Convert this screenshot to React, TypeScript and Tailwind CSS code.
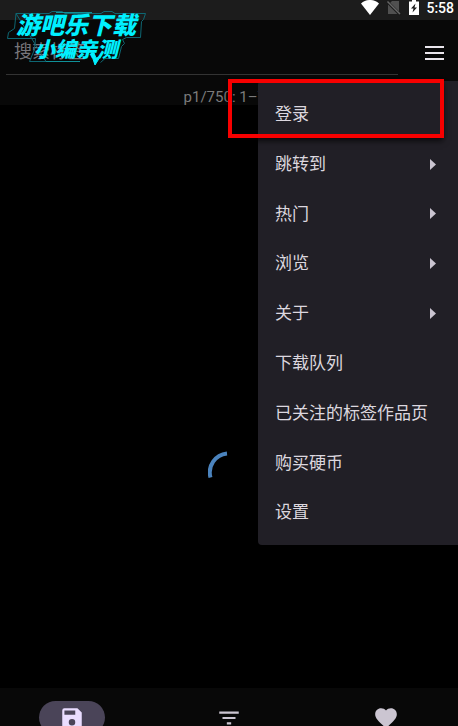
import { useState } from "react";

const menuItems = [
  { label: "登录" },
  { label: "跳转到", sub: true },
  { label: "热门", sub: true },
  { label: "浏览", sub: true },
  { label: "关于", sub: true },
  { label: "下载队列" },
  { label: "已关注的标签作品页" },
  { label: "购买硬币" },
  { label: "设置" },
];

function StatusBar() {
  return (
    <div className="flex h-5 items-start justify-end gap-1.5 bg-[#1c1c1c] pr-1 text-white">
      <svg className="h-4 w-5" viewBox="0 0 20 16" fill="currentColor">
        <path d="M1 3.500C6-1.200 14-1.200 19 3.500L10 15z" />
      </svg>
      <svg className="h-4 w-4" viewBox="0 0 16 16">
        <path d="M6 1h7v13H2V5z" fill="#505050" />
        <path d="M1 1.500L14.500 15" stroke="#1c1c1c" strokeWidth="3" />
        <path d="M1.500 1.500L14 14" stroke="#666" strokeWidth="1.500" />
      </svg>
      <svg className="h-4 w-3" viewBox="0 0 12 16">
        <path d="M4 0h4v1.500h3V15H1V1.500h3z" fill="#fff" />
        <path d="M7.500 3.500L3 8.500h2.500L4.500 12.500l4.500-5H6.500z" fill="#1c1c1c" />
      </svg>
      <span className="text-[14px] leading-4 font-medium">5:58</span>
    </div>
  );
}

function Watermark() {
  return (
    <div className="pointer-events-none absolute top-2 left-1 w-[150px] pt-0.5 font-black text-[#00f0ff] italic">
      <svg className="absolute inset-0 h-[60px] w-[150px]" viewBox="0 0 150 60" fill="none" stroke="#0e6672">
        <path d="M12 5.500H45L48 3.500H58L61 5.500H97L100 3.500H108L111 5.500H141.500L139.500 11.500L137.500 13.500L136.500 29.500H122.500L118.500 31.500L120.500 35.500L117.500 38.500L114.500 50.500H101L96.500 54.500M42 53.500H25.500L30.500 41.500L31.500 30.500H3.500L4.500 24.500L10.500 20.500L12 5.500z" />
        <path d="M52 4.500H88M42 53.500H76" stroke="#0f9098" />
        <path d="M87 45H90L92 50L96 49L91 57z" fill="#00f0ff" stroke="#00f0ff" />
      </svg>
      <div className="relative pl-3 text-[24px] leading-[32px]">游吧乐下载</div>
      <div className="relative -mt-1 pl-[30px] text-[21px] leading-[24px]">小编亲测</div>
    </div>
  );
}

export default function App() {
  const [query, setQuery] = useState("");

  return (
    <div className="relative flex min-h-screen flex-col overflow-hidden bg-black font-['Roboto','Noto_Sans_CJK_SC',sans-serif]">
      <StatusBar />

      <header className="bg-[#080808]">
        <div className="flex h-[61px] items-start justify-between pr-3 pl-[6px]">
          <input
            type="text"
            aria-label="搜索标签"
            placeholder="搜索标签"
            value={query}
            onChange={(e) => setQuery(e.target.value)}
            className="mr-6 h-[55px] min-w-0 flex-1 border-b border-[#333] bg-transparent px-2 pt-2 text-[18px] text-white outline-none placeholder:text-[#77757a]"
          />
          <button aria-label="菜单" className="mt-[21px] flex h-6 w-6 items-center justify-center text-[#e9e5ec]">
            <svg className="h-[14px] w-5" viewBox="0 0 20 14" fill="currentColor">
              <path d="M1 0h19v2H1zM1 6h19v2H1zM1 12h19v2H1z" />
            </svg>
          </button>
        </div>
        <p className="h-6 pt-1 text-center text-[15px] leading-6 text-[#7b7b7b]">p1/750: 1–75</p>
      </header>

      <main className="flex flex-1 items-center justify-center pt-[150px]">
        <svg className="h-[42px] w-[42px]" viewBox="0 0 42 42" fill="none">
          <path d="M19 2.500A19 19 0 0 0 2.500 26.500" stroke="#4b83bd" strokeWidth="4" />
        </svg>
      </main>

      <nav className="h-[38px] overflow-hidden bg-[#080808] pt-[13px]">
        <div className="-mx-1.5 grid grid-cols-3 justify-items-center text-[#cbc5d1]">
          <button aria-label="保存" className="flex h-[33px] w-[66px] items-center justify-center rounded-full bg-[#4a4458] text-[#eaddff]">
            <svg className="h-[26px] w-[26px]" viewBox="0 0 24 24" fill="currentColor">
              <path d="M17 3H5a2 2 0 0 0-2 2v14a2 2 0 0 0 2 2h14a2 2 0 0 0 2-2V7zm-5 16a3 3 0 1 1 0-6 3 3 0 0 1 0 6zm3-10H5V5h10z" />
            </svg>
          </button>
          <button aria-label="筛选" className="flex h-[33px] w-[66px] items-center justify-center">
            <svg className="h-[26px] w-[26px]" viewBox="0 0 24 24" fill="currentColor">
              <path d="M10 18h4v-2h-4zM3 6v2h18V6zm3 7h12v-2H6z" />
            </svg>
          </button>
          <button aria-label="收藏" className="flex h-[33px] w-[66px] items-center justify-center">
            <svg className="h-[26px] w-[26px]" viewBox="0 0 24 24" fill="currentColor">
              <path d="M12 21.350l-1.450-1.320C5.400 15.360 2 12.280 2 8.500 2 5.420 4.420 3 7.500 3c1.740 0 3.410.810 4.500 2.090C13.090 3.810 14.760 3 16.500 3 19.580 3 22 5.420 22 8.500c0 3.780-3.400 6.860-8.550 11.540z" />
            </svg>
          </button>
        </div>
      </nav>

      <div role="menu" className="absolute top-[81px] right-0 grid h-[464px] w-[200px] auto-rows-fr rounded-l bg-[#211f26] py-2">
        {menuItems.map((item) => (
          <button
            key={item.label}
            role="menuitem"
            className="flex items-center justify-between pt-0.5 pr-[22px] pl-[17px] text-left text-[17px] whitespace-nowrap text-[#dcd7df]"
          >
            {item.label}
            {item.sub && (
              <svg className="h-3 w-[6px]" viewBox="0 0 6 12" fill="#cbc5d1">
                <path d="M0 0l6 5.500-6 5.500z" />
              </svg>
            )}
          </button>
        ))}
      </div>

      {/* highlight around the login entry */}
      <div className="pointer-events-none absolute top-[79px] right-[14px] h-[59px] w-[216px] border-4 border-[#f70000] shadow-md shadow-black/60" />
      <Watermark />
    </div>
  );
}
